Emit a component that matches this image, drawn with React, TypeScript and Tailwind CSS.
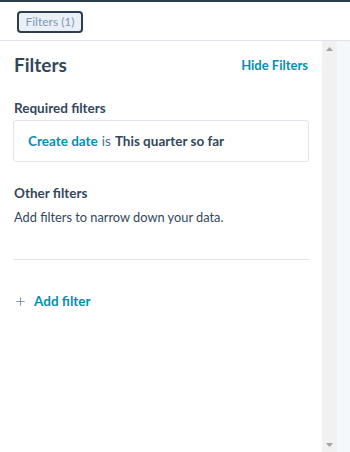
import { Plus } from 'lucide-react'

export default function App() {
  return (
    <div className="w-[350px] h-[452px] bg-white flex flex-col overflow-hidden font-['Lato',sans-serif] text-[#33475b]">
      <div className="h-[2px] bg-[#2d3e50]" />
      <div className="h-[39px] px-[17px] pt-[9px] border-b border-[#dfe3eb] flex items-start">
        <button className="h-[22px] w-[66px] rounded-[4px] border-2 border-[#2d3e50] bg-[#eaf0f6] text-[12px] text-[#7c98b6] leading-none flex items-center justify-center">
          Filters (1)
        </button>
      </div>
      <div className="flex flex-1 min-h-0">
        <div className="w-[322px] px-[13px] pt-[12px]">
          <div className="flex items-center justify-between">
            <h2 className="text-[19px] font-bold leading-[24px] pl-px">Filters</h2>
            <span className="text-[13px] font-bold text-[#0091ae] pr-px mt-[2px]">Hide Filters</span>
          </div>
          <div className="mt-[22px] text-[13.5px] font-bold leading-[18px] pl-px">Required filters</div>
          <div className="mt-[3px] h-[42px] rounded-[3px] border border-[#dfe3eb] px-[14px] flex items-center text-[13.5px]">
            <span className="font-bold text-[#0091ae]">Create date</span>
            <span className="mx-[4px] text-[#516f90]">is</span>
            <span className="font-bold">This quarter so far</span>
          </div>
          <div className="mt-[22px] text-[13.5px] font-bold leading-[18px] pl-px">Other filters</div>
          <div className="mt-[6px] text-[12.8px] leading-[18px] pl-px">Add filters to narrow down your data.</div>
          <div className="mt-[33px] h-px bg-[#dfe3eb]" />
          <div className="mt-[31px] flex items-center gap-[7px] pl-px">
            <Plus size={13} strokeWidth={1.8} className="text-[#7c98b6]" />
            <span className="text-[13.5px] font-bold text-[#0091ae]">Add filter</span>
          </div>
        </div>
        <div className="w-[15px] bg-[#f1f1f1] flex flex-col items-center justify-between pt-[6px] pb-[5px]">
          <svg width="7" height="4" viewBox="0 0 7 4"><path d="M3.5 0 L7 4 L0 4 Z" fill="#a3a3a3" /></svg>
          <svg width="7" height="4" viewBox="0 0 7 4"><path d="M0 0 L7 0 L3.5 4 Z" fill="#a3a3a3" /></svg>
        </div>
        <div className="flex-1 bg-[#f5f8fa]" />
      </div>
    </div>
  )
}
